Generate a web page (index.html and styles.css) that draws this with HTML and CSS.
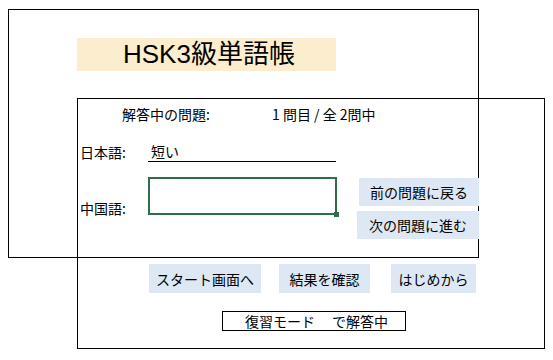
FILE: index.html
```html
<!DOCTYPE html>
<html lang="ja">
<head>
    <meta charset="UTF-8">
    <meta name="viewport" content="width=device-width, initial-scale=1.0">
    <title>HSK3級単語帳</title>
    <link rel="stylesheet" href="styles.css">
</head>
<body>
    <div class="sheet">
        <div class="frame top-frame">
            <div class="title">HSK3級単語帳</div>
        </div>

        <!-- quiz panel overlaps the title frame -->
        <div class="frame quiz-frame">
            <div class="progress">
                <span class="progress-label">解答中の問題:</span>
                <span class="progress-count">1 問目 / 全 2問中</span>
            </div>

            <div class="jp-row">
                <span class="row-label">日本語:</span>
                <span class="jp-word">短い</span>
            </div>

            <div class="cn-row">
                <span class="row-label cn-label">中国語:</span>
                <div class="answer-box"><span class="handle"></span></div>
                <div class="nav-buttons">
                    <button class="btn btn-prev">前の問題に戻る</button>
                    <button class="btn btn-next">次の問題に進む</button>
                </div>
            </div>

            <div class="actions">
                <button class="btn btn-start">スタート画面へ</button>
                <button class="btn btn-result">結果を確認</button>
                <button class="btn btn-restart">はじめから</button>
            </div>

            <div class="mode">
                <span class="mode-name">復習モード</span>
                <span class="mode-suffix">で解答中</span>
            </div>
        </div>
    </div>
</body>
</html>
```

FILE: styles.css
```css
* {
    box-sizing: border-box;
}

body {
    margin: 0;
    background: #ffffff;
    font-family: 'Noto Sans CJK JP', 'Liberation Sans', sans-serif;
    color: #000000;
}

.sheet {
    position: relative;
    width: 553px;
    height: 360px;
    padding: 9px 0 0 8px;
}

.frame {
    border: 1px solid #000000;
}

.top-frame {
    width: 471px;
    height: 249px;
    padding: 28px 0 0 68px;
}

.title {
    width: 259px;
    height: 33px;
    padding-left: 46px;
    background: #fdedcf;
    font-family: 'Liberation Sans', 'Noto Sans CJK JP', sans-serif;
    font-size: 26px;
    line-height: 33px;
}

.quiz-frame {
    position: absolute;
    left: 77px;
    top: 98px;
    width: 468px;
    height: 251px;
}

.progress {
    display: flex;
    height: 20px;
    margin-top: 5px;
    padding-left: 44px;
    font-size: 14px;
    line-height: 20px;
}

.progress-label {
    width: 150px;
}

.jp-row {
    display: flex;
    height: 20px;
    margin-top: 18px;
    padding-left: 2px;
    font-size: 14px;
    line-height: 20px;
}

.row-label {
    width: 68px;
}

.jp-word {
    width: 188px;
    padding-left: 3px;
    border-bottom: 1px solid #000000;
    line-height: 19px;
}

.cn-row {
    display: flex;
    align-items: flex-start;
    margin-top: 15px;
    padding-left: 2px;
    font-size: 14px;
}

.cn-label {
    margin-top: 21px;
    line-height: 20px;
}

.answer-box {
    position: relative;
    width: 189px;
    height: 38px;
    border: 2px solid #2e6d47;
}

.handle {
    position: absolute;
    right: -4px;
    bottom: -4px;
    width: 5px;
    height: 5px;
    background: #2e6d47;
}

.nav-buttons {
    display: flex;
    flex-direction: column;
    align-items: flex-end;
    gap: 5px;
    width: 122px;
    margin-left: 20px;
    margin-top: 1px;
}

.btn {
    border: none;
    padding: 0;
    background: #dde8f4;
    font-family: 'Noto Sans CJK JP', sans-serif;
    font-size: 14px;
    color: #000000;
    line-height: 28px;
    height: 28px;
    text-align: center;
}

.btn-prev {
    width: 120px;
}

.btn-next {
    width: 122px;
}

.actions {
    display: flex;
    margin-top: 25px;
    padding-left: 71px;
}

.actions .btn {
    height: 29px;
}

.btn-start {
    width: 112px;
}

.btn-result {
    width: 91px;
    margin-left: 18px;
}

.btn-restart {
    width: 85px;
    margin-left: 21px;
}

.mode {
    display: flex;
    width: 184px;
    height: 20px;
    margin: 18px 0 0 144px;
    padding-left: 22px;
    border: 1px solid #000000;
    font-size: 14px;
    line-height: 18px;
}

.mode-name {
    width: 87px;
}
```
